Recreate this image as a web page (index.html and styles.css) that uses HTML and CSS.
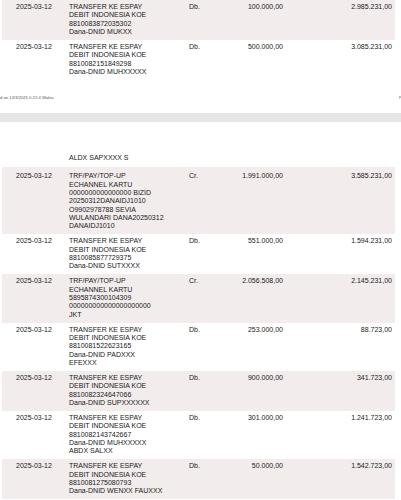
FILE: index.html
```html
<!DOCTYPE html>
<html lang="en">
<head>
    <meta charset="UTF-8">
    <meta name="viewport" content="width=device-width, initial-scale=1.0">
    <title>Mutasi Rekening</title>
    <link rel="stylesheet" href="styles.css">
</head>
<body>
<div class="page">
    <div class="row striped">
        <div class="date">2025-03-12</div>
        <div class="desc">TRANSFER KE ESPAY<br>DEBIT INDONESIA KOE<br>8810083872035302<br>Dana-DNID MUKXX</div>
        <div class="type">Db.</div>
        <div class="amount">100.000,00</div>
        <div class="balance">2.985.231,00</div>
    </div>
    <div class="row">
        <div class="date">2025-03-12</div>
        <div class="desc">TRANSFER KE ESPAY<br>DEBIT INDONESIA KOE<br>8810082151849298<br>Dana-DNID MUHXXXXX</div>
        <div class="type">Db.</div>
        <div class="amount">500.000,00</div>
        <div class="balance">3.085.231,00</div>
    </div>

    <div class="footer">
        <span>d on 13/3/2025 0:22:4 Waktu</span>
        <span class="page-no">Page 1 dari 2</span>
    </div>
</div>

<div class="page-gap"></div>

<div class="page page-next">
    <div class="carry">ALDX SAPXXXX S</div>
    <div class="row striped row-first">
        <div class="date">2025-03-12</div>
        <div class="desc">TRF/PAY/TOP-UP<br>ECHANNEL KARTU<br>0000000000000000 BIZID<br>20250312DANAIDJ1010<br>O9902978788 SEVIA<br>WULANDARI DANA20250312<br>DANAIDJ1010</div>
        <div class="type">Cr.</div>
        <div class="amount">1.991.000,00</div>
        <div class="balance">3.585.231,00</div>
    </div>
    <div class="row">
        <div class="date">2025-03-12</div>
        <div class="desc">TRANSFER KE ESPAY<br>DEBIT INDONESIA KOE<br>8810085877729375<br>Dana-DNID SUTXXXX</div>
        <div class="type">Db.</div>
        <div class="amount">551.000,00</div>
        <div class="balance">1.594.231,00</div>
    </div>
    <div class="row striped">
        <div class="date">2025-03-12</div>
        <div class="desc">TRF/PAY/TOP-UP<br>ECHANNEL KARTU<br>5895874300104309<br>000000000000000000000<br>JKT</div>
        <div class="type">Cr.</div>
        <div class="amount">2.056.508,00</div>
        <div class="balance">2.145.231,00</div>
    </div>
    <div class="row">
        <div class="date">2025-03-12</div>
        <div class="desc">TRANSFER KE ESPAY<br>DEBIT INDONESIA KOE<br>8810081522623165<br>Dana-DNID PADXXX<br>EFEXXX</div>
        <div class="type">Db.</div>
        <div class="amount">253.000,00</div>
        <div class="balance">88.723,00</div>
    </div>
    <div class="row striped">
        <div class="date">2025-03-12</div>
        <div class="desc">TRANSFER KE ESPAY<br>DEBIT INDONESIA KOE<br>8810082324647066<br>Dana-DNID SUPXXXXXX</div>
        <div class="type">Db.</div>
        <div class="amount">900.000,00</div>
        <div class="balance">341.723,00</div>
    </div>
    <div class="row">
        <div class="date">2025-03-12</div>
        <div class="desc">TRANSFER KE ESPAY<br>DEBIT INDONESIA KOE<br>8810082143742667<br>Dana-DNID MUHXXXXX<br>ABDX SALXX</div>
        <div class="type">Db.</div>
        <div class="amount">301.000,00</div>
        <div class="balance">1.241.723,00</div>
    </div>
    <div class="row striped">
        <div class="date">2025-03-12</div>
        <div class="desc">TRANSFER KE ESPAY<br>DEBIT INDONESIA KOE<br>8810081275080793<br>Dana-DNID WENXX FAUXXX</div>
        <div class="type">Db.</div>
        <div class="amount">50.000,00</div>
        <div class="balance">1.542.723,00</div>
    </div>
</div>
</body>
</html>
```

FILE: styles.css
```css
body {
    margin: 0;
    background-color: #fff;
    color: #1a1a1a;
    font-family: "Liberation Sans", Arial, sans-serif;
    font-size: 7px;
    line-height: 8.33px;
    overflow: hidden;
}

.page {
    width: 401px;
}

.row {
    display: grid;
    grid-template-columns: 67px 120px 41px 53px 109px;
    width: 390px;
    margin-left: 2px;
    padding: 3px 3px 3.7px 0;
}

.striped {
    background-color: #f2ecec;
}

.date {
    padding-left: 14px;
}

.amount,
.balance {
    text-align: right;
}

.footer {
    display: grid;
    grid-template-columns: 1fr 2px;
    margin-top: 15px;
    font-size: 4.2px;
    line-height: 5px;
    color: #555;
    white-space: nowrap;
}

.page-no {
    overflow: hidden;
}

.page-gap {
    height: 9px;
    margin-top: 13px;
    background-color: #e6e6e6;
}

.page-next {
    padding-top: 32px;
}

.carry {
    padding-left: 69px;
    margin-bottom: 5px;
}

.row-first {
    padding-top: 5px;
}
```
